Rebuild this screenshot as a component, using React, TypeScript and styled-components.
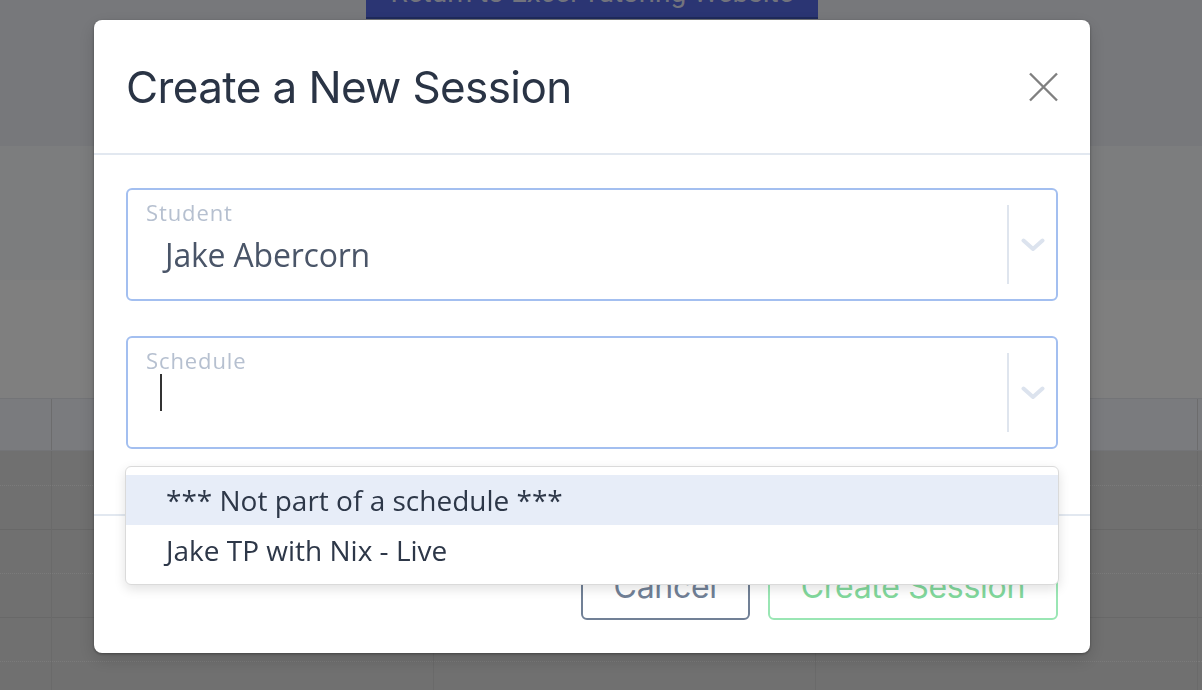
import React from 'react'
import styled, { createGlobalStyle } from 'styled-components'

const GlobalStyle = createGlobalStyle`
  html, body {
    margin: 0;
    padding: 0;
    overflow: hidden;
  }
  body {
    font-family: 'Open Sans', 'Liberation Sans', sans-serif;
  }
  * {
    box-sizing: border-box;
  }
`

const Page = styled.div`
  display: flex;
  flex-direction: column;
  width: 100vw;
  height: 100vh;
  background-color: #e0e0e0;
`

const TopNav = styled.div`
  display: flex;
  align-items: flex-start;
  padding-left: 366px;
  height: 146px;
  background-color: #eef0f6;
`

const Banner = styled.div`
  width: 452px;
  height: 39px;
  margin-top: -20px;
  background-color: #566ae6;
  border-bottom: 2px solid #3e54b8;
  color: rgba(255, 255, 255, 0.85);
  font-family: 'Roboto', sans-serif;
  font-size: 28px;
  line-height: 26px;
  white-space: nowrap;
  overflow: hidden;
  text-align: center;
`

const Section = styled.div<{ $height: number; $bg: string }>`
  height: ${(p) => p.$height}px;
  background-color: ${(p) => p.$bg};
`

const CalendarHeader = styled.div`
  display: grid;
  grid-template-columns: 51px 382px 382px 382px 1fr;
  height: 53px;
  background-color: #f4f6fc;
  border-top: 1px solid #e6e8ee;
  border-bottom: 1px solid #e6e8ee;
`

const HeaderCell = styled.div<{ $first?: boolean }>`
  border-left: ${(p) => (p.$first ? 'none' : '1px solid #d8d8da')};
`

const CalendarBody = styled.div`
  flex: 1;
  overflow: hidden;
`

const BodyGrid = styled.div`
  display: grid;
  grid-template-columns: 51px 382px 382px 382px 1fr;
  margin-top: -9px;
`

const DayColumn = styled.div<{ $first?: boolean }>`
  display: flex;
  flex-direction: column;
  border-left: ${(p) => (p.$first ? 'none' : '1px solid #d4d4d4')};
`

const Slot = styled.div<{ $half?: boolean }>`
  height: 44px;
  border-bottom: ${(p) => (p.$half ? '1px dotted #f6f6f6' : '1px solid #d0d0d0')};
`

const Overlay = styled.div`
  position: fixed;
  inset: 0;
  background-color: rgba(0, 0, 0, 0.5);
  padding: 20px 0 0 94px;
`

const Modal = styled.div`
  width: 996px;
  background-color: #ffffff;
  border-radius: 8px;
  box-shadow: 0 1px 3px rgba(0, 0, 0, 0.35), 0 6px 18px rgba(0, 0, 0, 0.15);
`

const ModalHeader = styled.div`
  display: flex;
  align-items: center;
  justify-content: space-between;
  height: 135px;
  padding: 0 32px 0 32px;
  border-bottom: 2px solid #e2e8f0;
`

const Title = styled.h2`
  margin: 0;
  font-family: 'Inter', 'Roboto', sans-serif;
  font-weight: 400;
  font-size: 44px;
  letter-spacing: -0.6px;
  color: #2a3445;
`

const CloseButton = styled.button`
  display: flex;
  padding: 0;
  border: none;
  background: none;
  cursor: pointer;
`

const ModalBody = styled.div`
  display: flex;
  flex-direction: column;
  gap: 35px;
  padding: 33px 32px 65px;
`

const Field = styled.div`
  position: relative;
  display: flex;
  height: 113px;
  border: 2px solid #a3bff0;
  border-radius: 6px;
`

const ValueArea = styled.div`
  flex: 1;
  display: flex;
  flex-direction: column;
  align-items: flex-start;
  padding: 11px 0 0 18px;
`

const Label = styled.div`
  font-size: 22px;
  line-height: 22px;
  letter-spacing: 0.9px;
  color: #b6c0d0;
`

const Value = styled.div`
  margin: 12px 0 0 19px;
  font-size: 32px;
  line-height: 40px;
  letter-spacing: -0.2px;
  color: #4a5568;
`

const Caret = styled.span`
  width: 2px;
  height: 37px;
  margin: 3px 0 0 14px;
  background-color: #333333;
`

const Indicators = styled.div`
  display: flex;
  align-items: center;
`

const Separator = styled.span`
  align-self: stretch;
  width: 2px;
  margin: 15px 0;
  background-color: #dfe5ee;
`

const ChevronBox = styled.div`
  display: flex;
  align-items: center;
  justify-content: center;
  width: 47px;
`

const Menu = styled.div`
  position: absolute;
  top: calc(100% + 19px);
  left: -3px;
  right: -3px;
  z-index: 2;
  padding: 8px 0 9px;
  background-color: #ffffff;
  border: 1px solid #dadada;
  border-radius: 6px;
  box-shadow: 0 4px 12px rgba(0, 0, 0, 0.12);
`

const Option = styled.div<{ $active?: boolean }>`
  height: 50px;
  padding-left: 40px;
  font-size: 28px;
  line-height: 50px;
  color: #2d3748;
  background-color: ${(p) => (p.$active ? '#e7edf8' : 'transparent')};
`

const ModalFooter = styled.div`
  display: flex;
  justify-content: flex-end;
  gap: 18px;
  padding: 36px 32px 33px;
  border-top: 2px solid #e2e8f0;
`

const Button = styled.button<{ $tone: 'grey' | 'green' }>`
  height: 68px;
  padding: 0 31px;
  background-color: #ffffff;
  border: 2px solid ${(p) => (p.$tone === 'grey' ? '#718096' : '#9ae6b4')};
  border-radius: 6px;
  color: ${(p) => (p.$tone === 'grey' ? '#718096' : '#82d89c')};
  font-family: 'Inter', 'Roboto', sans-serif;
  font-size: 32px;
  letter-spacing: -0.3px;
  cursor: pointer;
`

function Chevron() {
  return (
    <svg width='24' height='14' viewBox='0 0 24 14'>
      <path
        d='M2.5 2.5 L12 11 L21.5 2.5'
        fill='none'
        stroke='#dce3ee'
        strokeWidth='4'
        strokeLinecap='round'
        strokeLinejoin='round'
      />
    </svg>
  )
}

function CloseIcon() {
  return (
    <svg width='30' height='30' viewBox='0 0 30 30'>
      <path d='M2 1.5 L29 28.5 M29 1.5 L2 28.5' stroke='#808080' strokeWidth='2.4' />
    </svg>
  )
}

const columns = [0, 1, 2, 3, 4]
const slots = [true, false, true, false, true, false]

export default function App() {
  return (
    <>
      <GlobalStyle />
      <Page>
        <TopNav>
          <Banner>Return to Excel Tutoring Website</Banner>
        </TopNav>
        <Section $height={134} $bg='#f8fafd' />
        <Section $height={118} $bg='#ffffff' />
        <CalendarHeader>
          {columns.map((c) => (
            <HeaderCell key={c} $first={c === 0} />
          ))}
        </CalendarHeader>
        <CalendarBody>
          <BodyGrid>
            {columns.map((c) => (
              <DayColumn key={c} $first={c === 0}>
                {slots.map((half, i) => (
                  <Slot key={i} $half={half} />
                ))}
              </DayColumn>
            ))}
          </BodyGrid>
        </CalendarBody>
      </Page>

      <Overlay>
        <Modal>
          <ModalHeader>
            <Title>Create a New Session</Title>
            <CloseButton aria-label='Close'>
              <CloseIcon />
            </CloseButton>
          </ModalHeader>

          <ModalBody>
            <Field>
              <ValueArea>
                <Label>Student</Label>
                <Value>Jake Abercorn</Value>
              </ValueArea>
              <Indicators>
                <Separator />
                <ChevronBox>
                  <Chevron />
                </ChevronBox>
              </Indicators>
            </Field>

            <Field>
              <ValueArea>
                <Label>Schedule</Label>
                <Caret />
              </ValueArea>
              <Indicators>
                <Separator />
                <ChevronBox>
                  <Chevron />
                </ChevronBox>
              </Indicators>
              <Menu>
                <Option $active>*** Not part of a schedule ***</Option>
                <Option>Jake TP with Nix - Live</Option>
              </Menu>
            </Field>
          </ModalBody>

          <ModalFooter>
            <Button $tone='grey'>Cancel</Button>
            <Button $tone='green'>Create Session</Button>
          </ModalFooter>
        </Modal>
      </Overlay>
    </>
  )
}
